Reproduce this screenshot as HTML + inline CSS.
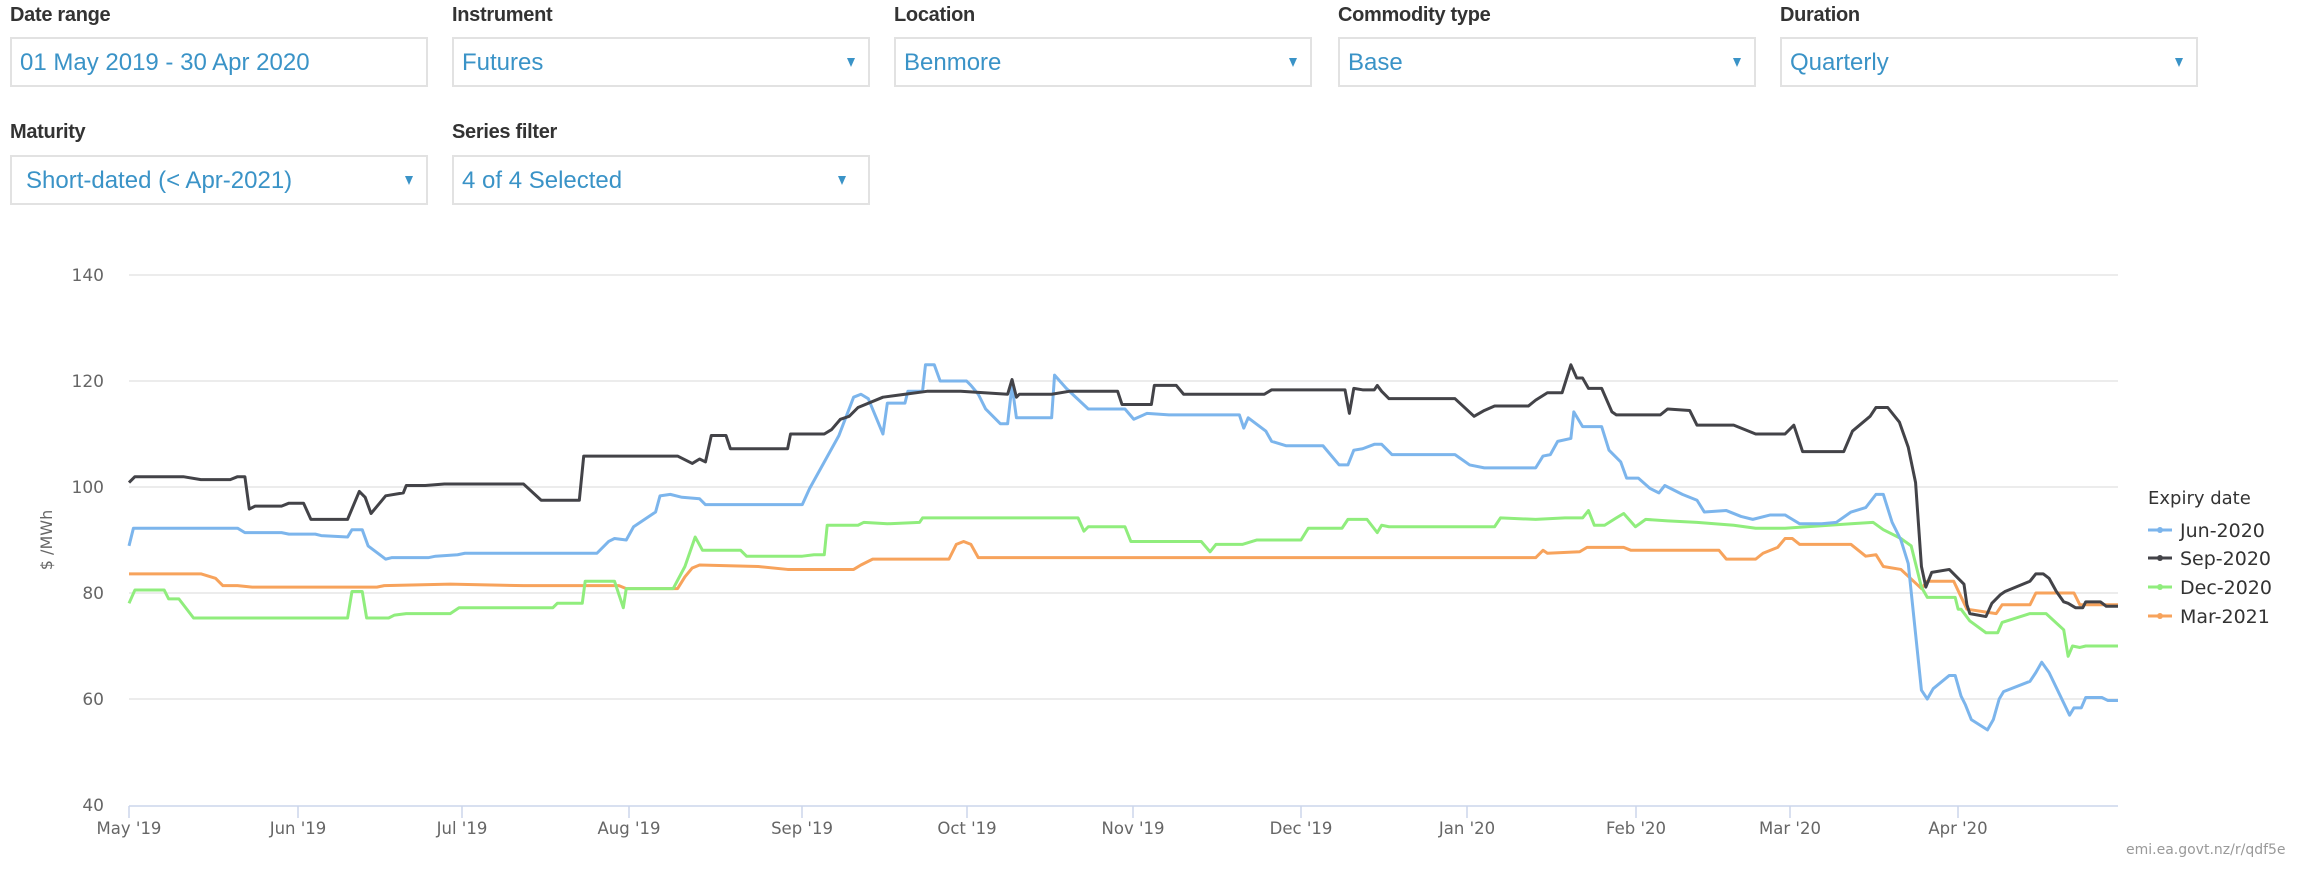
<!DOCTYPE html>
<html><head><meta charset="utf-8"><style>
body{margin:0;width:2311px;height:874px;background:#fff;font-family:"Liberation Sans",Arial,sans-serif;position:relative;overflow:hidden}
.lbl{position:absolute;font-weight:bold;font-size:20px;color:#333;letter-spacing:-0.3px}
.box{position:absolute;width:414px;height:46px;border:2px solid #e2e2e2;box-sizing:content-box}
.box span{position:absolute;left:8px;top:10px;font-size:24px;color:#3a93c7}
.box i{position:absolute;right:13px;top:19px;width:0;height:0;border-left:4px solid transparent;border-right:4px solid transparent;border-top:9px solid #3a93c7}
</style></head><body>
<div class="lbl" style="left:10px;top:4px">Date range</div>
<div class="lbl" style="left:452px;top:4px">Instrument</div>
<div class="lbl" style="left:894px;top:4px">Location</div>
<div class="lbl" style="left:1338px;top:4px">Commodity type</div>
<div class="lbl" style="left:1780px;top:4px">Duration</div>
<div class="box" style="left:10px;top:37px"><span>01 May 2019 - 30 Apr 2020</span></div>
<div class="box" style="left:452px;top:37px"><span>Futures</span><i></i></div>
<div class="box" style="left:894px;top:37px"><span>Benmore</span><i></i></div>
<div class="box" style="left:1338px;top:37px"><span>Base</span><i></i></div>
<div class="box" style="left:1780px;top:37px"><span>Quarterly</span><i></i></div>
<div class="lbl" style="left:10px;top:121px">Maturity</div>
<div class="lbl" style="left:452px;top:121px">Series filter</div>
<div class="box" style="left:10px;top:155px"><span style="left:14px">Short-dated (&lt; Apr-2021)</span><i></i></div>
<div class="box" style="left:452px;top:155px"><span>4 of 4 Selected</span><i style="right:22px"></i></div>

<svg width="2311" height="874" style="position:absolute;left:0;top:0" font-family="'DejaVu Sans',sans-serif">
<g stroke="#e6e6e6" stroke-width="1.5">
<line x1="129" x2="2118" y1="275" y2="275"/><line x1="129" x2="2118" y1="381" y2="381"/><line x1="129" x2="2118" y1="487" y2="487"/><line x1="129" x2="2118" y1="593" y2="593"/><line x1="129" x2="2118" y1="699" y2="699"/>
</g>
<g stroke="#ccd6eb" stroke-width="1.5">
<line x1="129" x2="2118" y1="806" y2="806"/>
<line x1="129" x2="129" y1="806" y2="818"/><line x1="298" x2="298" y1="806" y2="818"/><line x1="462" x2="462" y1="806" y2="818"/><line x1="629" x2="629" y1="806" y2="818"/><line x1="802" x2="802" y1="806" y2="818"/><line x1="967" x2="967" y1="806" y2="818"/><line x1="1133" x2="1133" y1="806" y2="818"/><line x1="1301" x2="1301" y1="806" y2="818"/><line x1="1467" x2="1467" y1="806" y2="818"/><line x1="1636" x2="1636" y1="806" y2="818"/><line x1="1790" x2="1790" y1="806" y2="818"/><line x1="1958" x2="1958" y1="806" y2="818"/>
</g>
<g fill="#666" font-size="17" text-anchor="end">
<text x="104" y="281">140</text><text x="104" y="387">120</text><text x="104" y="493">100</text><text x="104" y="599">80</text><text x="104" y="705">60</text><text x="104" y="811">40</text>
</g>
<text transform="translate(52,540) rotate(-90)" fill="#666" font-size="16" text-anchor="middle">$ /MWh</text>
<g fill="#666" font-size="16.5" text-anchor="middle">
<text x="129" y="834">May '19</text><text x="298" y="834">Jun '19</text><text x="462" y="834">Jul '19</text><text x="629" y="834">Aug '19</text><text x="802" y="834">Sep '19</text><text x="967" y="834">Oct '19</text><text x="1133" y="834">Nov '19</text><text x="1301" y="834">Dec '19</text><text x="1467" y="834">Jan '20</text><text x="1636" y="834">Feb '20</text><text x="1790" y="834">Mar '20</text><text x="1958" y="834">Apr '20</text>
</g>
<g transform="matrix(1.4668,0,0,1.4722,10.2,-0.3)" fill="none" stroke-width="3" stroke-linejoin="round">
<polyline vector-effect="non-scaling-stroke" stroke="#f7a35c" points="81,390 130,390 140,393 145,398 155,398 165,399 250,399 255,398 300,397 350,398 415,398 420,400 455,400 460,392 465,386 470,384 510,385 530,387 575,387 580,384 588,380 640,380 645,370 650,368 655,370 660,379 1040,379 1045,374 1048,376 1070,375 1075,372 1100,372 1105,374 1165,374 1170,380 1190,380 1195,376 1205,372 1210,366 1215,366 1220,370 1255,370 1260,374 1265,378 1272,377 1277,385 1289,387 1303,400 1307,395 1325,395 1334,414 1354,417 1358,411 1377,411 1381,403 1407,403 1411,411 1437,411"/>
<polyline vector-effect="non-scaling-stroke" stroke="#90ed7d" points="81,410 85,401 105,401 108,407 115,407 125,420 150,420 230,420 233,402 240,402 243,420 258,420 262,418 270,417 300,417 306,413 370,413 373,410 390,410 392,395 412,395 418,413 420,400 452,400 460,385 467,365 472,374 498,374 502,378 540,378 548,377 555,377 557,357 578,357 582,355 598,356 620,355 622,352 728,352 732,361 735,358 760,358 764,368 812,368 818,375 822,370 840,370 850,367 880,367 885,359 908,359 912,353 925,353 932,362 935,357 940,358 1012,358 1016,352 1040,353 1060,352 1072,352 1076,347 1080,357 1087,357 1095,352 1100,349 1108,358 1115,353 1130,354 1150,355 1175,357 1190,359 1210,359 1255,356 1270,355 1277,360 1289,366 1296,371 1303,399 1307,406 1326,406 1328,414 1330,414 1336,422 1347,430 1355,430 1358,423 1377,417 1388,417 1400,428 1403,446 1406,439 1411,440 1415,439 1437,439"/>
<polyline vector-effect="non-scaling-stroke" stroke="#7cb5ec" points="81,371 84,359 155,359 160,362 185,362 190,363 208,363 212,364 230,365 233,360 240,360 244,371 256,380 260,379 285,379 290,378 305,377 310,376 400,376 408,368 412,366 420,367 425,358 440,348 443,337 450,336 458,338 470,339 474,343 540,343 545,332 555,314 565,296 575,270 580,268 585,271 590,283 595,295 598,274 610,274 612,266 622,266 624,248 630,248 634,259 652,259 655,262 660,268 665,278 675,288 680,288 683,262 686,284 710,284 712,255 720,264 735,278 760,278 766,285 775,281 790,282 838,282 841,291 844,284 856,293 860,300 870,303 895,303 906,316 912,316 916,306 922,305 930,302 935,302 942,309 985,309 995,316 1005,318 1040,318 1045,310 1050,309 1055,300 1064,298 1066,280 1072,290 1085,290 1090,306 1098,314 1102,325 1110,325 1118,332 1124,335 1128,330 1140,336 1150,340 1155,348 1170,347 1180,351 1188,353 1200,350 1210,350 1215,353 1220,356 1235,356 1245,355 1255,348 1265,345 1272,336 1277,336 1283,355 1289,367 1294,383 1303,469 1307,475 1311,468 1322,459 1326,459 1330,473 1333,479 1337,489 1348,496 1352,489 1356,475 1359,470 1377,463 1381,457 1385,450 1390,457 1404,486 1407,481 1412,481 1415,474 1426,474 1430,476 1437,476"/>
<polyline vector-effect="non-scaling-stroke" stroke="#434348" points="81,328 85,324 118,324 130,326 150,326 155,324 160,324 163,346 167,344 185,344 190,342 200,342 205,353 230,353 238,334 242,338 246,349 256,337 268,335 270,330 283,330 296,329 350,329 362,340 388,340 391,310 455,310 465,315 470,312 474,314 478,296 488,296 491,305 530,305 532,295 555,295 560,292 566,285 572,283 578,277 595,270 610,268 625,266 648,266 680,268 683,258 686,270 688,268 710,268 722,266 755,266 758,275 778,275 780,262 795,262 800,268 855,268 860,265 910,265 913,281 916,264 922,265 930,265 932,262 935,266 940,271 985,271 998,283 1005,279 1012,276 1035,276 1040,272 1048,267 1058,267 1064,248 1068,257 1072,257 1076,264 1085,264 1092,280 1095,282 1125,282 1130,278 1145,279 1150,289 1175,289 1190,295 1210,295 1216,289 1222,307 1250,307 1256,293 1268,283 1272,277 1280,277 1288,287 1294,304 1299,328 1303,385 1306,399 1310,389 1322,387 1332,397 1334,411 1336,417 1347,419 1351,410 1357,404 1360,402 1377,395 1381,390 1386,390 1390,393 1395,402 1400,409 1403,410 1408,413 1413,413 1415,409 1425,409 1429,412 1437,412"/>
</g>
<text x="2148" y="504" font-size="18" fill="#333">Expiry date</text>
<g font-size="19" fill="#333" stroke-width="3">
<line x1="2148" x2="2172" y1="530" y2="530" stroke="#7cb5ec"/><circle cx="2160" cy="530" r="3" fill="#7cb5ec"/><text x="2180" y="537">Jun-2020</text>
<line x1="2148" x2="2172" y1="558" y2="558" stroke="#434348"/><circle cx="2160" cy="558" r="3" fill="#434348"/><text x="2180" y="565">Sep-2020</text>
<line x1="2148" x2="2172" y1="587" y2="587" stroke="#90ed7d"/><circle cx="2160" cy="587" r="3" fill="#90ed7d"/><text x="2180" y="594">Dec-2020</text>
<line x1="2148" x2="2172" y1="616" y2="616" stroke="#f7a35c"/><circle cx="2160" cy="616" r="3" fill="#f7a35c"/><text x="2180" y="623">Mar-2021</text>
</g>
<text x="2126" y="854" font-size="14" fill="#999">emi.ea.govt.nz/r/qdf5e</text>
</svg>
</body></html>
